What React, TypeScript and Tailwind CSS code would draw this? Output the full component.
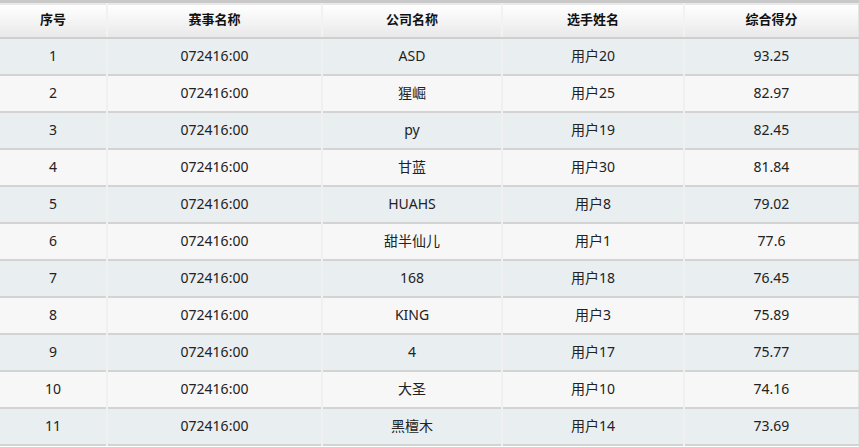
import React from "react";

type Row = { rank: number; match: string; company: string; player: string; score: string };

const rows: Row[] = [
  { rank: 1, match: "072416:00", company: "ASD", player: "用户20", score: "93.25" },
  { rank: 2, match: "072416:00", company: "猩崛", player: "用户25", score: "82.97" },
  { rank: 3, match: "072416:00", company: "py", player: "用户19", score: "82.45" },
  { rank: 4, match: "072416:00", company: "甘蓝", player: "用户30", score: "81.84" },
  { rank: 5, match: "072416:00", company: "HUAHS", player: "用户8", score: "79.02" },
  { rank: 6, match: "072416:00", company: "甜半仙儿", player: "用户1", score: "77.6" },
  { rank: 7, match: "072416:00", company: "168", player: "用户18", score: "76.45" },
  { rank: 8, match: "072416:00", company: "KING", player: "用户3", score: "75.89" },
  { rank: 9, match: "072416:00", company: "4", player: "用户17", score: "75.77" },
  { rank: 10, match: "072416:00", company: "大圣", player: "用户10", score: "74.16" },
  { rank: 11, match: "072416:00", company: "黑檀木", player: "用户14", score: "73.69" },
];

const headers = ["序号", "赛事名称", "公司名称", "选手姓名", "综合得分"];
const widths = ["w-[107px]", "w-[215px]", "w-[180px]", "w-[182px]", "w-[175px]"];

export default function App() {
  return (
    <div className="w-[859px] h-[447px] overflow-hidden bg-white font-['Noto_Sans','Noto_Sans_CJK_SC',sans-serif] text-[14px] text-[#222]">
      <table className="w-full table-fixed border-collapse border-r-2 border-r-[#e4e4e4]">
        <thead>
          <tr className="h-[36px] border-t-[3px] border-t-[#c9c9c9] bg-gradient-to-b from-white via-[#f4f4f4] to-[#e8e8e8]">
            {headers.map((h, i) => (
              <th
                key={h}
                className={`${widths[i]} p-0 text-center font-bold text-[13px] text-[#111] border-b-2 border-b-[#cfcfcf] ${
                  i > 0 ? "border-l-2 border-l-[#f2f2f2]" : ""
                }`}
              >
                {h}
              </th>
            ))}
          </tr>
        </thead>
        <tbody>
          {rows.map((r, idx) => {
            const cells = [String(r.rank), r.match, r.company, r.player, r.score];
            return (
              <tr
                key={r.rank}
                className={`h-[37px] border-b-2 border-b-[#d3d3d3] ${
                  idx % 2 === 0 ? "bg-[#e9eef1]" : "bg-[#f7f7f7]"
                }`}
              >
                {cells.map((c, i) => (
                  <td
                    key={i}
                    className={`p-0 text-center leading-none ${
                      i > 0 ? "border-l-2 border-l-[#f0f0f0]" : ""
                    }`}
                  >
                    {c}
                  </td>
                ))}
              </tr>
            );
          })}
        </tbody>
      </table>
    </div>
  );
}
